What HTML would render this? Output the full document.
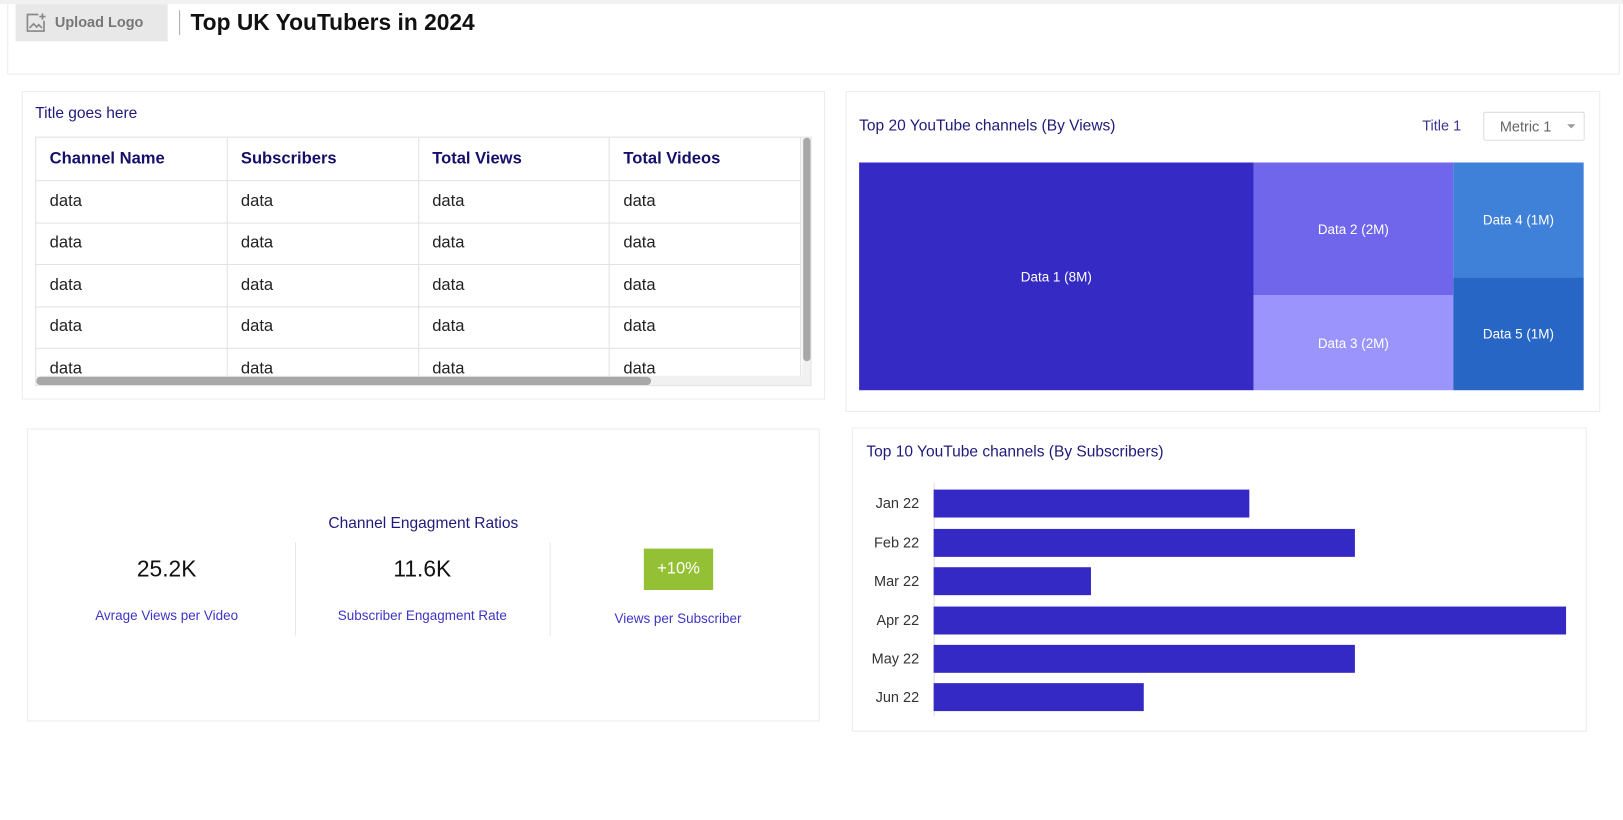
<!DOCTYPE html>
<html><head><style>
*{margin:0;padding:0;box-sizing:border-box}
body{width:1623px;height:819px;background:#fff;font-family:"Liberation Sans",sans-serif;position:relative;overflow:hidden}
#w{position:absolute;left:0;top:0;width:1568px;height:792px;transform:scale(1.03508);transform-origin:0 0}
.a{position:absolute}
.card{position:absolute;border:1px solid #ececec;background:#fff}
.navy{color:#1f1a7a}
td{border:1px solid #e2e2e2;height:40.5px;padding-left:13px;font-size:16px;color:#222;width:185px;white-space:nowrap}
th{border:1px solid #e2e2e2;height:42px;padding-left:13px;font-size:16px;color:#14106a;text-align:left;font-weight:bold;width:185px}
.lbl{font-size:13px;color:#3d35c7;text-align:center}
.val{font-size:22px;color:#111;text-align:center}
.bar{position:absolute;left:902px;height:27px;background:#3429c4}
.yl{position:absolute;left:830px;width:58px;text-align:right;font-size:14px;color:#333}
.tm{position:absolute;color:#fff;font-size:13px;display:flex;align-items:center;justify-content:center}
</style></head><body><div id="w">
<div class="a" style="left:0;top:0;width:1568px;height:4px;background:#f1f1f1"></div>
<div class="card" style="left:7px;top:4px;width:1558px;height:68px;border-top:none"></div>
<div class="a" style="left:15px;top:4px;width:147px;height:36px;background:#e8e8e8"></div>
<svg class="a" style="left:24px;top:11px" width="22" height="22" viewBox="0 0 22 22" fill="none" stroke="#888" stroke-width="1.6"><path d="M13 3H2.5v16h16V9"/><path d="M4.5 16l4-4 3 3 2-2 3 3"/><path d="M17 2v6M14 5h6"/></svg>
<div class="a" style="left:53px;top:13px;font-size:14px;color:#777;font-weight:bold">Upload Logo</div>
<div class="a" style="left:173px;top:10px;width:1px;height:24px;background:#aaa"></div>
<div class="a" style="left:184px;top:9px;font-size:22px;font-weight:bold;color:#111">Top UK YouTubers in 2024</div>

<div class="card" style="left:21px;top:88px;width:776px;height:298px"></div>
<div class="a navy" style="left:34px;top:101px;font-size:15px">Title goes here</div>
<div class="a" style="left:34px;top:132px;width:750px;height:241px;overflow:hidden;border:1px solid #e2e2e2">
<table style="border-collapse:collapse;width:740px;margin:-1px 0 0 -1px">
<tr><th>Channel Name</th><th>Subscribers</th><th>Total Views</th><th>Total Videos</th></tr>
<tr><td>data</td><td>data</td><td>data</td><td>data</td></tr>
<tr><td>data</td><td>data</td><td>data</td><td>data</td></tr>
<tr><td>data</td><td>data</td><td>data</td><td>data</td></tr>
<tr><td>data</td><td>data</td><td>data</td><td>data</td></tr>
<tr><td>data</td><td>data</td><td>data</td><td>data</td></tr>
</table>
<div class="a" style="left:0;top:230px;width:750px;height:10px;background:#f1f1f1"></div>
<div class="a" style="left:0;top:231px;width:594px;height:8px;border-radius:4px;background:#a8a8a8"></div>
<div class="a" style="left:740px;top:0;width:10px;height:230px;background:#f1f1f1"></div>
<div class="a" style="left:741px;top:0;width:7px;height:216px;border-radius:4px;background:#a8a8a8"></div>
</div>

<div class="card" style="left:817px;top:88px;width:729px;height:310px"></div>
<div class="a navy" style="left:830px;top:113px;font-size:15px">Top 20 YouTube channels (By Views)</div>
<div class="a navy" style="left:1374px;top:113px;font-size:14px;color:#3a3590">Title 1</div>
<div class="a" style="left:1433px;top:108px;width:98px;height:28px;border:1px solid #ddd;border-radius:2px;font-size:14px;color:#666;padding:5px 0 0 15px">Metric 1<span style="position:absolute;left:80px;top:11px;border:4px solid transparent;border-top-color:#999;border-bottom:none"></span></div>
<div class="tm" style="left:830px;top:157px;width:381px;height:220px;background:#352ac4">Data 1 (8M)</div>
<div class="tm" style="left:1211px;top:157px;width:193px;height:128px;background:#7066ec">Data 2 (2M)</div>
<div class="tm" style="left:1211px;top:285px;width:193px;height:92px;background:#9b94fc">Data 3 (2M)</div>
<div class="tm" style="left:1404px;top:157px;width:126px;height:111px;background:#3f80d8">Data 4 (1M)</div>
<div class="tm" style="left:1404px;top:268px;width:126px;height:109px;background:#2766c4">Data 5 (1M)</div>

<div class="card" style="left:26px;top:414px;width:766px;height:283px"></div>
<div class="a navy" style="left:26px;top:497px;width:766px;text-align:center;font-size:15px">Channel Engagment Ratios</div>
<div class="a" style="left:285px;top:524px;width:1px;height:90px;background:#e6e6e6"></div>
<div class="a" style="left:531px;top:524px;width:1px;height:90px;background:#e6e6e6"></div>
<div class="a val" style="left:41px;top:537px;width:240px">25.2K</div>
<div class="a val" style="left:288px;top:537px;width:240px">11.6K</div>
<div class="a" style="left:622px;top:530px;width:67px;height:40px;background:#93c034;color:#fff;font-size:16px;text-align:center;line-height:40px">+10%</div>
<div class="a lbl" style="left:41px;top:587px;width:240px">Avrage Views per Video</div>
<div class="a lbl" style="left:288px;top:587px;width:240px">Subscriber Engagment Rate</div>
<div class="a lbl" style="left:535px;top:590px;width:240px">Views per Subscriber</div>

<div class="card" style="left:823px;top:413px;width:710px;height:294px"></div>
<div class="a navy" style="left:837px;top:428px;font-size:15px">Top 10 YouTube channels (By Subscribers)</div>
<div class="a" style="left:902px;top:466px;width:1px;height:226px;background:#ddd"></div>
<div class="bar" style="top:473px;width:305px"></div>
<div class="bar" style="top:511px;width:407px"></div>
<div class="bar" style="top:548px;width:152px"></div>
<div class="bar" style="top:586px;width:611px"></div>
<div class="bar" style="top:623px;width:407px"></div>
<div class="bar" style="top:660px;width:203px"></div>
<div class="yl" style="top:478px">Jan 22</div>
<div class="yl" style="top:516px">Feb 22</div>
<div class="yl" style="top:553px">Mar 22</div>
<div class="yl" style="top:591px">Apr 22</div>
<div class="yl" style="top:628px">May 22</div>
<div class="yl" style="top:665px">Jun 22</div>
</div></body></html>
